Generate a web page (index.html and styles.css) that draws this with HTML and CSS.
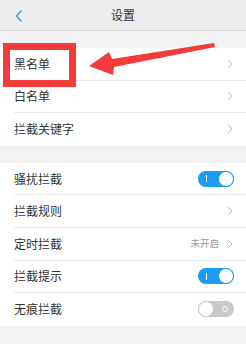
FILE: index.html
```html
<!DOCTYPE html>
<html>
<head>
<meta charset="utf-8">
<link rel="stylesheet" href="styles.css">
</head>
<body>
<div class="page">
  <header class="topbar">
    <svg class="back" width="10" height="14" viewBox="0 0 10 14"><path d="M7.5 1.5 L2.5 7 L7.5 12.5" fill="none" stroke="#2a9af0" stroke-width="1.3"/></svg>
    <div class="title">设置</div>
  </header>
  <div class="gap top"></div>
  <section class="group">
    <div class="row"><span class="label">黑名单</span><span class="right"><svg class="chev" width="6" height="10" viewBox="0 0 6 10"><path d="M1 1 L5 5 L1 9" fill="none" stroke="#bdbdbd" stroke-width="1"/></svg></span></div>
    <div class="row"><span class="label">白名单</span><span class="right"><svg class="chev" width="6" height="10" viewBox="0 0 6 10"><path d="M1 1 L5 5 L1 9" fill="none" stroke="#bdbdbd" stroke-width="1"/></svg></span></div>
    <div class="row"><span class="label">拦截关键字</span><span class="right"><svg class="chev" width="6" height="10" viewBox="0 0 6 10"><path d="M1 1 L5 5 L1 9" fill="none" stroke="#bdbdbd" stroke-width="1"/></svg></span></div>
  </section>
  <div class="gap"></div>
  <section class="group">
    <div class="row"><span class="label">骚扰拦截</span><span class="right"><span class="toggle on"><span class="mark"></span><span class="knob"></span></span></span></div>
    <div class="row"><span class="label">拦截规则</span><span class="right"><svg class="chev" width="6" height="10" viewBox="0 0 6 10"><path d="M1 1 L5 5 L1 9" fill="none" stroke="#bdbdbd" stroke-width="1"/></svg></span></div>
    <div class="row"><span class="label">定时拦截</span><span class="right"><span class="value">未开启</span><svg class="chev" width="6" height="10" viewBox="0 0 6 10"><path d="M1 1 L5 5 L1 9" fill="none" stroke="#bdbdbd" stroke-width="1"/></svg></span></div>
    <div class="row"><span class="label">拦截提示</span><span class="right"><span class="toggle on"><span class="mark"></span><span class="knob"></span></span></span></div>
    <div class="row"><span class="label">无痕拦截</span><span class="right"><span class="toggle off"><span class="knob"></span><span class="ring"></span></span></span></div>
  </section>
  <div class="gap bottom"></div>

  <div class="highlight"></div>
  <svg class="arrow" width="246" height="90" viewBox="0 0 246 90"><polygon points="89,66 109,52 112,59 214,43 215,47 114,67 113,75" fill="#f23b3b"/></svg>
</div>
</body>
</html>
```
FILE: styles.css
```css
* { box-sizing: border-box; }
html, body { margin: 0; padding: 0; }
body {
  width: 246px;
  height: 344px;
  overflow: hidden;
  background: #f2f2f2;
  font-family: "Noto Sans CJK SC", "Noto Sans", sans-serif;
  color: #333;
}
.page { position: relative; width: 246px; height: 344px; }
.topbar {
  height: 31px;
  background: #ececec;
  border-bottom: 1px solid #d9d9d9;
  display: flex;
  align-items: center;
  justify-content: center;
  position: relative;
}
.back { position: absolute; left: 14px; top: 9px; }
.title { font-size: 12px; color: #333; line-height: 1; }
.gap { height: 17px; }
.gap.top { height: 17px; }
.gap.bottom { height: 18px; }
.group { background: #fff; }
.row {
  height: 32.6px;
  margin-left: 14px;
  padding-right: 13px;
  display: flex;
  align-items: center;
  justify-content: space-between;
  border-bottom: 1px solid #ececec;
}
.row:last-child { border-bottom: none; }
.label { font-size: 12px; color: #333; line-height: 1; }
.right { display: flex; align-items: center; gap: 8px; }
.value { font-size: 9.5px; color: #999; line-height: 1; }
.chev { display: block; }
.toggle {
  width: 36px;
  height: 16px;
  border-radius: 8px;
  position: relative;
  display: block;
  margin-right: -1px;
}
.toggle.on { background: #1a9df0; }
.toggle.off { background: #c9c9c9; }
.knob {
  position: absolute;
  top: 0;
  width: 16px;
  height: 16px;
  border-radius: 50%;
  background: #fff;
}
.toggle.on .knob { right: 0; border: 1px solid #1a9df0; }
.toggle.off .knob { left: 0; border: 1px solid #c9c9c9; }
.mark {
  position: absolute;
  left: 8px;
  top: 4.5px;
  width: 1.4px;
  height: 7px;
  background: #fff;
}
.ring {
  position: absolute;
  right: 6px;
  top: 5px;
  width: 6px;
  height: 6px;
  border-radius: 50%;
  border: 1.3px solid #fff;
}
.highlight {
  position: absolute;
  left: 3px;
  top: 43px;
  width: 73px;
  height: 44px;
  border: 7px solid #f23b3b;
}
.arrow { position: absolute; left: 0; top: 0; }
```
